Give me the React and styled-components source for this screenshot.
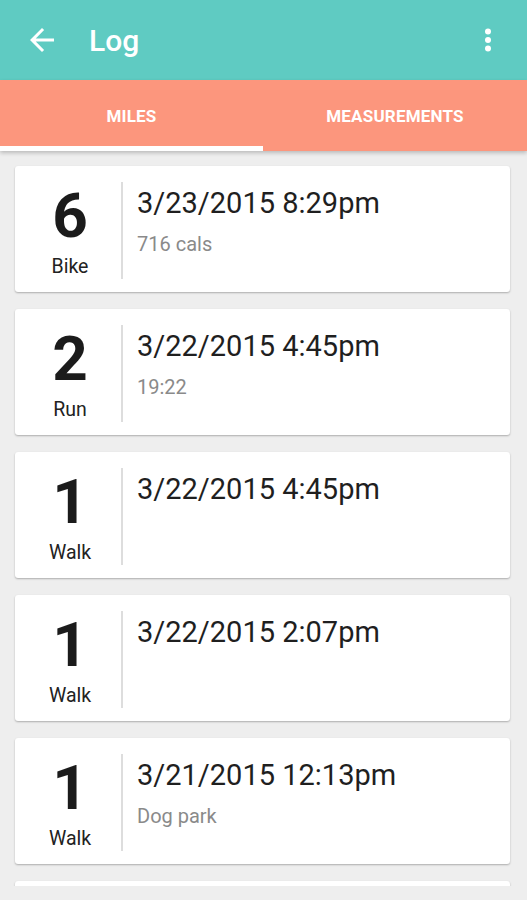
import React from 'react';
import styled, { createGlobalStyle } from 'styled-components';

const GlobalStyle = createGlobalStyle`
    html, body {
        margin: 0;
        padding: 0;
        background: #eeeeee;
        font-family: Roboto, "Liberation Sans", sans-serif;
        overflow: hidden;
    }
`;

const Screen = styled.div`
    width: 527px;
    height: 900px;
    overflow: hidden;
    background: #eeeeee;
`;

const AppBar = styled.div`
    display: flex;
    align-items: center;
    height: 80px;
    padding: 0 21px 0 24px;
    box-sizing: border-box;
    background: #5fcbc2;
    color: #fff;
`;

const Title = styled.div`
    flex: 1;
    margin-left: 29px;
    font-size: 30px;
    font-weight: 500;
    line-height: 1;
    margin-top: 1px;
`;

const IconBox = styled.svg`
    width: 36px;
    height: 36px;
    fill: #fff;
    display: block;
`;

const Tabs = styled.div`
    display: grid;
    grid-template-columns: 263px 1fr;
    height: 71px;
    background: #fc967d;
    box-shadow: 0 2px 4px rgba(0, 0, 0, 0.22);
    position: relative;
`;

const Tab = styled.div`
    display: flex;
    align-items: center;
    justify-content: center;
    box-sizing: border-box;
    padding-top: 5px;
    border-bottom: 5px solid ${p => (p.active ? '#ffffff' : 'transparent')};
    color: #fff;
    font-size: 17px;
    font-weight: 700;
    letter-spacing: 0.2px;
`;

// viewport of the list ends a little above the bottom edge
const List = styled.div`
    display: flex;
    flex-direction: column;
    gap: 17px;
    height: 735px;
    overflow: hidden;
    box-sizing: border-box;
    padding: 15px 17px 0 15px;
`;

const Card = styled.div`
    display: flex;
    flex-shrink: 0;
    height: 126px;
    box-sizing: border-box;
    padding: 16px 0 13px;
    background: #fff;
    border-radius: 3px;
    box-shadow: 0 1px 2px rgba(0, 0, 0, 0.28);
`;

const Stat = styled.div`
    display: flex;
    flex-direction: column;
    align-items: center;
    width: 108px;
    flex-shrink: 0;
    box-sizing: border-box;
    padding-left: 4px;
    border-right: 2px solid #dddddd;
`;

const Amount = styled.div`
    margin-top: 3px;
    font-size: 62px;
    font-weight: 700;
    line-height: 62px;
    color: #1b1b1b;
`;

const Kind = styled.div`
    margin-top: 9px;
    font-size: 19.5px;
    line-height: 22px;
    color: #222;
`;

const Details = styled.div`
    padding: 6px 0 0 14px;
`;

const When = styled.div`
    font-size: 29px;
    line-height: 30px;
    color: #1f1f1f;
`;

const Note = styled.div`
    margin-top: 15px;
    font-size: 20px;
    line-height: 22px;
    color: #8a8a8a;
`;

const entries = [
    { amount: 6, kind: 'Bike', when: '3/23/2015 8:29pm', note: '716 cals' },
    { amount: 2, kind: 'Run', when: '3/22/2015 4:45pm', note: '19:22' },
    { amount: 1, kind: 'Walk', when: '3/22/2015 4:45pm' },
    { amount: 1, kind: 'Walk', when: '3/22/2015 2:07pm' },
    { amount: 1, kind: 'Walk', when: '3/21/2015 12:13pm', note: 'Dog park' },
];

function BackArrow() {
    return (
        <IconBox viewBox="0 0 24 24">
            <path d="M20 11H7.83l5.59-5.59L12 4l-8 8 8 8 1.41-1.41L7.83 13H20v-2z" />
        </IconBox>
    );
}

function MoreVert() {
    return (
        <IconBox viewBox="0 0 24 24">
            <circle cx="12" cy="6.3" r="2" />
            <circle cx="12" cy="12" r="2" />
            <circle cx="12" cy="17.7" r="2" />
        </IconBox>
    );
}

export default function App() {
    return (
        <Screen>
            <GlobalStyle />
            <AppBar>
                <BackArrow />
                <Title>Log</Title>
                <MoreVert />
            </AppBar>

            <Tabs>
                <Tab active>MILES</Tab>
                <Tab>MEASUREMENTS</Tab>
            </Tabs>

            <List>
                {entries.map((e, i) => (
                    <Card key={i}>
                        <Stat>
                            <Amount>{e.amount}</Amount>
                            <Kind>{e.kind}</Kind>
                        </Stat>
                        <Details>
                            <When>{e.when}</When>
                            {e.note && <Note>{e.note}</Note>}
                        </Details>
                    </Card>
                ))}
                {/* next card, only its top edge is in view */}
                <Card />
            </List>
        </Screen>
    );
}
